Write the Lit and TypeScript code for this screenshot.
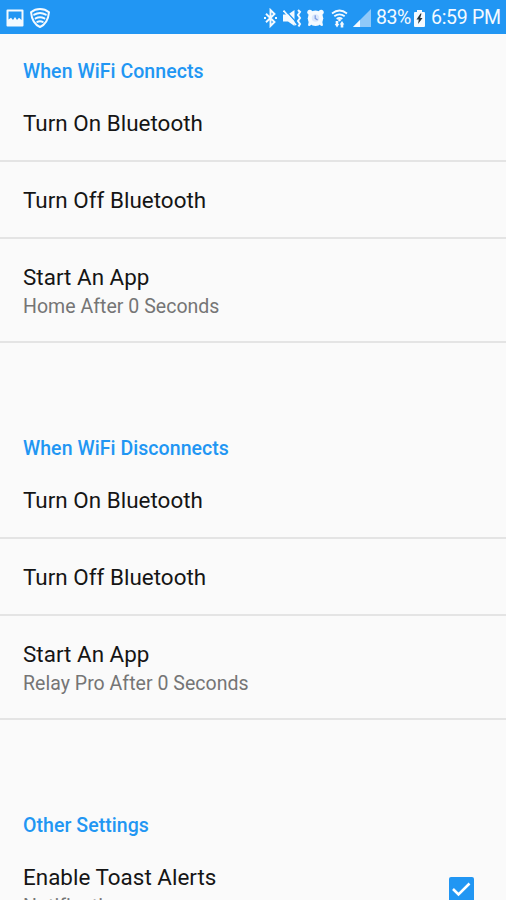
import { LitElement, html, css, nothing } from "lit";
import { customElement } from "lit/decorators.js";

@customElement("status-bar")
class StatusBar extends LitElement {
  static styles = css`
    :host { display: flex; height: 34px; box-sizing: border-box; background: #2196f3; color: #f4faff; align-items: center; padding: 2px 6px 0 6px; justify-content: space-between; }
    .group { display: flex; align-items: center; }
    svg { display: block; flex: none; }
    .shield { margin-left: 6px; }
    .mute { margin-left: 6px; }
    .alarm { margin-left: 5px; }
    .wifi { margin-left: 7px; }
    .signal { margin-left: 5px; }
    .text { font: 400 19.5px/30px Roboto, sans-serif; white-space: nowrap; flex: none; }
    .percent { margin-left: 5px; width: 37px; letter-spacing: -0.4px; }
    .battery { margin-left: 1px; }
    .clock { margin-left: 6px; width: 69px; letter-spacing: -0.3px; }
  `;
  render() {
    return html`
      <div class="group">
        <svg width="18" height="18" viewBox="0 0 18 18"><path fill="#f4faff" fill-rule="evenodd" d="M1.500 .5h15q1 0 1 1v15q0 1-1 1h-15q-1 0-1-1v-15q0-1 1-1zM2.500 2.500v8l2.500-1.800 2 2.300L9 8l2 3 2-2.300 2.500 2.300V2.500z"/></svg>
        <svg class="shield" width="20" height="20" viewBox="0 0 20 20" fill="none" stroke="#f4faff" stroke-linecap="round"><path stroke-width="2" d="M10 1C7 1 3.700 2 1 4.200 1.600 10.500 4 16.500 10 19c6-2.500 8.400-8.500 9-14.800C16.300 2 13 1 10 1z"/><path stroke-width="2" d="M4.200 6.700q5.800-3.600 11.600 0M5.600 10.400q4.400-2.500 8.800 0M7.300 13.900q2.700-1.400 5.400 0"/></svg>
      </div>
      <div class="group">
        <svg width="13" height="20" viewBox="0 0 13 20" fill="none" stroke="#f4faff" stroke-width="1.900"><path d="M2 5.800l8.500 8.200L6.500 18V2l4 4L2 14.200"/><path stroke-width="2" d="M0 10h2M11 10h2"/></svg>
        <svg class="mute" width="19" height="18" viewBox="0 0 19 18"><path fill="#f4faff" d="M0 5.500h5L11.500 1v16L5 12.500H0z"/><path stroke="#2196f3" stroke-width="1.200" d="M2.500 1.500l11 12"/><path stroke="#f4faff" stroke-width="1.800" d="M.5 1.500l12.500 14.500"/><path fill="none" stroke="#f4faff" stroke-width="2" d="M15 1l2 2-2 3 2 3-2 3 2 3-1.500 2.500"/></svg>
        <svg class="alarm" width="17" height="18" viewBox="0 0 18 18"><g fill="#f4faff"><circle cx="9" cy="9.300" r="8.200"/><circle cx="3" cy="3" r="2.700"/><circle cx="15" cy="3" r="2.700"/><path d="M2 12l-1 5 2 .5 3-3zM16 12l1 5-2 .5-3-3z"/></g><circle cx="9" cy="9" r="4" fill="#dbe8fc"/><path d="M8.700 6v3.500l2.500 1.500" fill="none" stroke="#7898e0" stroke-width="1.300"/></svg>
        <svg class="wifi" width="17" height="19" viewBox="0 0 17 19" fill="none" stroke="#f4faff"><path stroke-width="1.800" d="M1 4.500q7.500-6 15 0M3.300 7.300q5.200-4 10.400 0M5.700 9.900q2.800-2 5.600 0"/><circle cx="8.500" cy="11" r="1.400" fill="#f4faff" stroke="none"/><path fill="#f4faff" stroke="none" d="M4.700 12h2.600v3h1l-2.300 3.500-2.300-3.500h1zM9.700 18.500h2.600v-3h1L11 12l-2.300 3.500h1z"/></svg>
        <svg class="signal" width="18" height="18" viewBox="0 0 18 18"><path fill="#8fc9f9" d="M0 18L18 0v18z"/><path fill="#f4faff" d="M0 18l7-7v7z"/></svg>
        <span class="text percent">83%</span>
        <svg class="battery" width="11" height="17" viewBox="0 0 11 17"><path fill="#f4faff" d="M3 0h5v2h2q1 0 1 1v13q0 1-1 1H1q-1 0-1-1V3q0-1 1-1h2z"/><path fill="#263238" d="M6.500 3.500L2.500 9.500h2.300L4 14l4.500-6H6.200l1.300-4.500z"/></svg>
        <span class="text clock">6:59 PM</span>
      </div>
    `;
  }
}

@customElement("pref-row")
class PrefRow extends LitElement {
  static properties = { label: {}, summary: {}, checked: { type: Boolean } };
  declare label: string;
  declare summary: string;
  declare checked: boolean;
  static styles = css`
    :host { display: flex; justify-content: space-between; box-sizing: border-box; padding: 24px 31px 22px 23px; border-bottom: 2px solid #e4e4e4; white-space: nowrap; font-family: Roboto, sans-serif; }
    .title { font-size: 22.4px; line-height: 29px; color: #151515; letter-spacing: 0.03px; }
    .summary { font-size: 19.5px; line-height: 29px; margin-bottom: -2px; color: #757575; letter-spacing: 0.03px; }
    .check { display: block; margin-top: 13px; }
  `;
  render() {
    return html`
      <div>
        <div class="title">${this.label}</div>
        ${this.summary ? html`<div class="summary">${this.summary}</div>` : nothing}
      </div>
      ${this.checked
        ? html`<svg class="check" width="27" height="27" viewBox="0 0 27 27"><rect x="1" y="1" width="25" height="25" rx="2" fill="#2196f3"/><path d="M5 13l5.500 5.500L21.500 7.500" fill="none" stroke="#fff" stroke-width="2.600"/></svg>`
        : nothing}
    `;
  }
}

@customElement("pref-section")
class PrefSection extends LitElement {
  static properties = { heading: {} };
  declare heading: string;
  static styles = css`
    :host { display: block; padding-bottom: 68px; }
    .heading { height: 51px; box-sizing: border-box; padding: 24px 23px 0; font: 500 19.5px/27px Roboto, sans-serif; letter-spacing: 0.06px; color: #2196f3; }
  `;
  render() {
    return html`<div class="heading">${this.heading}</div><slot></slot>`;
  }
}

@customElement("app-root")
class AppRoot extends LitElement {
  static styles = css`
    :host { display: block; height: 900px; overflow: hidden; background: #fafafa; }
  `;
  render() {
    return html`
      <status-bar></status-bar>
      <pref-section heading="When WiFi Connects">
        <pref-row label="Turn On Bluetooth"></pref-row>
        <pref-row label="Turn Off Bluetooth"></pref-row>
        <pref-row label="Start An App" summary="Home After 0 Seconds"></pref-row>
      </pref-section>
      <pref-section heading="When WiFi Disconnects">
        <pref-row label="Turn On Bluetooth"></pref-row>
        <pref-row label="Turn Off Bluetooth"></pref-row>
        <pref-row label="Start An App" summary="Relay Pro After 0 Seconds"></pref-row>
      </pref-section>
      <pref-section heading="Other Settings">
        <pref-row label="Enable Toast Alerts" summary="Notifications" checked></pref-row>
      </pref-section>
    `;
  }
}
